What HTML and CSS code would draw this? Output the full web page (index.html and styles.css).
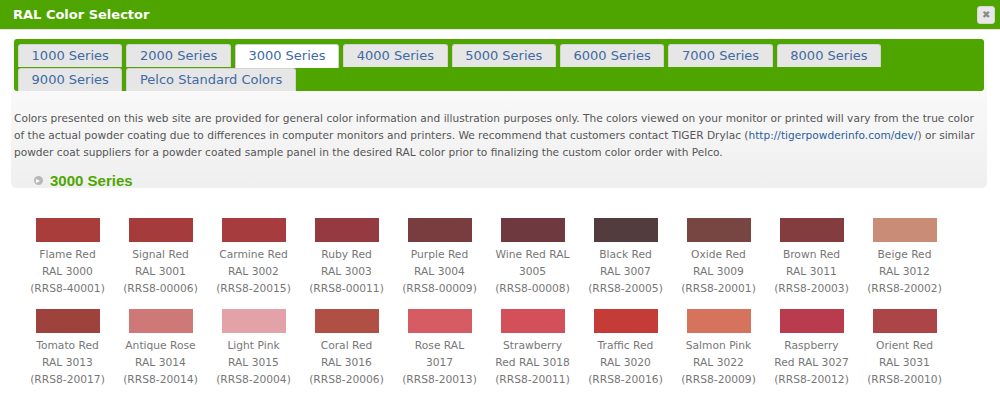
FILE: index.html
```html
<!DOCTYPE html>
<html lang="en">

<head>
    <meta charset="UTF-8" />
    <title>RAL Color Selector</title>
    <link rel="stylesheet" href="styles.css">
</head>

<body>
    <div class="dialog">
        <div class="titlebar">
            <span class="title">RAL Color Selector</span>
            <button class="close-btn" title="Close">&#x2716;</button>
        </div>

        <div class="panel">
            <ul class="tabs">
                <li><a href="#">1000 Series</a></li>
                <li><a href="#">2000 Series</a></li>
                <li class="active"><a href="#">3000 Series</a></li>
                <li><a href="#">4000 Series</a></li>
                <li><a href="#">5000 Series</a></li>
                <li><a href="#">6000 Series</a></li>
                <li><a href="#">7000 Series</a></li>
                <li><a href="#">8000 Series</a></li>
                <li><a href="#">9000 Series</a></li>
                <li><a href="#">Pelco Standard Colors</a></li>
            </ul>

            <p class="disclaimer">Colors presented on this web site are provided for general color information and illustration purposes only. The colors viewed on your monitor or printed will vary from the true color of the actual powder coating due to differences in computer monitors and printers. We recommend that customers contact TIGER Drylac (<a href="#">http://tigerpowderinfo.com/dev/</a>) or similar powder coat suppliers for a powder coated sample panel in the desired RAL color prior to finalizing the custom color order with Pelco.</p>

            <h2 class="series-title"><span class="bullet"></span>3000 Series</h2>
        </div>

        <div class="swatches" id="swatches"></div>
    </div>

    <script>
        var colors = [
            ["Flame Red", "3000", "40001", "#a83d3c"],
            ["Signal Red", "3001", "00006", "#a53c3b"],
            ["Carmine Red", "3002", "20015", "#a73c3f"],
            ["Ruby Red", "3003", "00011", "#953a40"],
            ["Purple Red", "3004", "00009", "#7a3d3f"],
            ["Wine Red RAL", "3005", "00008", "#6e3a3f"],
            ["Black Red", "3007", "20005", "#523c3e"],
            ["Oxide Red", "3009", "20001", "#774642"],
            ["Brown Red", "3011", "20003", "#843d3e"],
            ["Beige Red", "3012", "20002", "#c98c77"],
            ["Tomato Red", "3013", "20017", "#9e423e"],
            ["Antique Rose", "3014", "20014", "#ce7878"],
            ["Light Pink", "3015", "20004", "#e2a2a7"],
            ["Coral Red", "3016", "20006", "#b04f44"],
            ["Rose RAL", "3017", "20013", "#d65c64"],
            ["Strawberry Red RAL", "3018", "20011", "#d3505a"],
            ["Traffic Red", "3020", "20016", "#c43b38"],
            ["Salmon Pink", "3022", "20009", "#d5735d"],
            ["Raspberry Red RAL", "3027", "20012", "#b83b4e"],
            ["Orient Red", "3031", "20010", "#ab4548"]
        ];

        var wrapper = document.getElementById("swatches");

        for (var i = 0; i < colors.length; i++) {
            var c = colors[i];
            var name = c[0].indexOf("RAL") > -1 ? c[0] + " " + c[1] : c[0] + "<br>RAL " + c[1];
            var item = document.createElement("div");
            item.className = "swatch";
            item.innerHTML = '<div class="chip" style="background-color: ' + c[3] + ';"></div>' +
                '<div class="label">' + name + '<br>(RRS8-' + c[2] + ')</div>';
            wrapper.appendChild(item);
        }
    </script>
</body>

</html>
```

FILE: styles.css
```css
body {
    margin: 0;
    background-color: #fff;
    font-family: "DejaVu Sans", sans-serif;
}

.titlebar {
    height: 29px;
    background-color: #4ea500;
    border-bottom: 1px solid #e6e6e6;
    display: flex;
    align-items: center;
    justify-content: space-between;
    padding: 0 5px 0 13px;
}

.title {
    color: #fff;
    font-weight: bold;
    font-size: 13px;
}

.close-btn {
    width: 18px;
    height: 18px;
    padding: 0;
    border: 1px solid #d6d6d6;
    border-radius: 3px;
    background-color: #e8e8e8;
    color: #8a8a8a;
    font-size: 10px;
    line-height: 16px;
    cursor: pointer;
}

.panel {
    margin: 0 13px 0 11px;
    padding: 9px 3px 0 3px;
    background: linear-gradient(#ffffff, #efefef);
    border-radius: 0 0 5px 5px;
}

.tabs {
    list-style: none;
    margin: 0;
    padding: 5px 3px 0 4px;
    display: flex;
    flex-wrap: wrap;
    background-color: #4ea500;
    border-radius: 3px;
}

.tabs li {
    margin-right: 4px;
    height: 23px;
    background-color: #e6e6e6;
    border: 1px solid #d3d3d3;
    border-bottom: none;
    border-radius: 3px 3px 0 0;
    box-sizing: border-box;
    margin-bottom: 1px;
}

.tabs li:nth-child(n+9) {
    margin-bottom: 0;
}

.tabs li.active {
    background-color: #fff;
    height: 24px;
    margin-bottom: 0;
}

.tabs a {
    display: block;
    padding: 0 12.6px;
    line-height: 22px;
    font-size: 13px;
    color: #3f6aa3;
    text-decoration: none;
}

.disclaimer {
    margin: 0;
    padding: 19px 0 0 0;
    font-size: 10.6px;
    line-height: 17px;
    color: #555;
}

.disclaimer a {
    color: #2a5f9c;
    text-decoration: none;
}

.series-title {
    margin: 0;
    padding: 12px 0 0 20px;
    height: 15px;
    display: flex;
    align-items: center;
    font-family: "Liberation Sans", Arial, sans-serif;
    font-size: 15px;
    font-weight: bold;
    color: #4fa600;
}

.bullet {
    position: relative;
    width: 9px;
    height: 9px;
    border-radius: 50%;
    background-color: #b8b8b8;
    margin-right: 7px;
}

.bullet::after {
    content: "";
    position: absolute;
    left: 2px;
    top: 2.5px;
    border-left: 4px solid #fff;
    border-top: 2px solid transparent;
    border-bottom: 2px solid transparent;
}

.swatches {
    display: flex;
    flex-wrap: wrap;
    padding: 30px 0 0 21px;
    width: 930px;
}

.swatch {
    width: 93px;
    padding: 0 8.5px;
    box-sizing: border-box;
    margin-bottom: 12px;
    text-align: center;
}

.chip {
    width: 64px;
    height: 24px;
    margin: 0 auto 4px auto;
}

.label {
    font-size: 10.7px;
    line-height: 17px;
    color: #777;
}
```
